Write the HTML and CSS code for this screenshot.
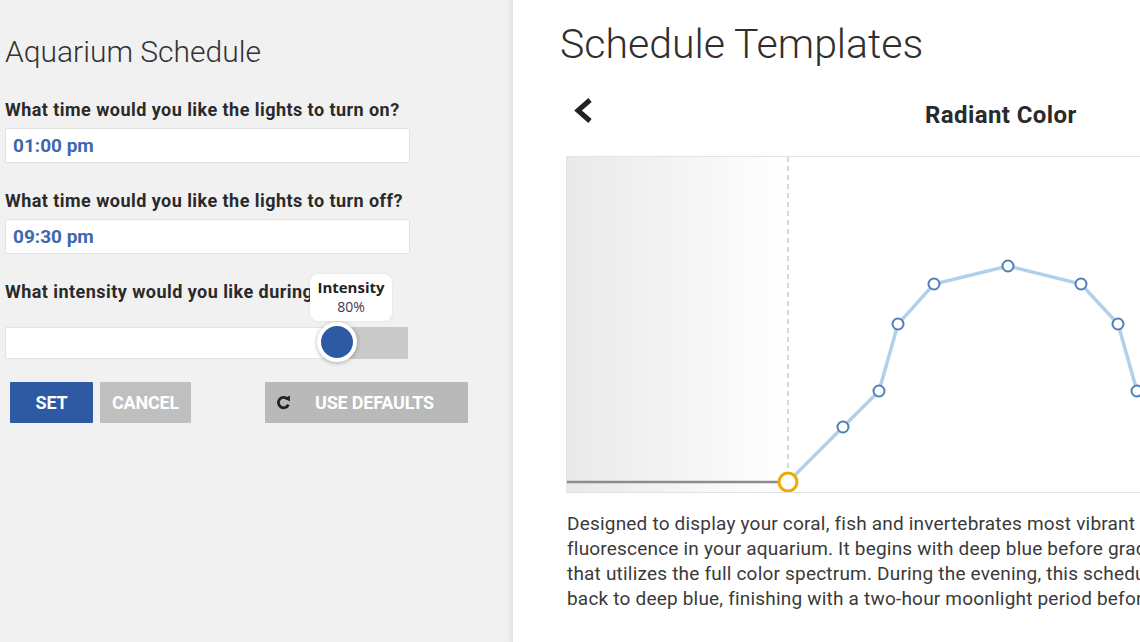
FILE: index.html
```html
<!DOCTYPE html>
<html lang="en">

<head>
    <meta charset="UTF-8">
    <meta name="viewport" content="width=device-width, initial-scale=1.0">
    <title>Aquarium Schedule</title>
    <link rel="stylesheet" href="styles.css">
</head>

<body>
    <div class="page">
        <!-- left: schedule form -->
        <section class="left">
            <h1 class="title">Aquarium Schedule</h1>

            <div class="q">What time would you like the lights to turn on?</div>
            <div class="field">01:00 pm</div>

            <div class="q q-next">What time would you like the lights to turn off?</div>
            <div class="field">09:30 pm</div>

            <div class="q q-next">What intensity would you like during the day?</div>
            <div class="slider">
                <div class="slider-fill"></div>
                <div class="slider-rest"></div>
                <div class="knob"></div>
                <div class="tip">
                    <b>Intensity</b>
                    <span>80%</span>
                </div>
            </div>

            <div class="actions">
                <button class="btn btn-set">SET</button>
                <button class="btn btn-cancel">CANCEL</button>
                <button class="btn btn-defaults">
                    <svg class="ico" width="15" height="15" viewBox="0 0 15 15">
                        <path d="M11.6 4.2 A5.2 5.2 0 1 0 12.4 9.6" fill="none" stroke="#222" stroke-width="2.8" />
                        <polygon points="8.6,3.4 14,0.6 13.8,6.6" fill="#222" />
                    </svg>
                    <span>USE DEFAULTS</span>
                </button>
            </div>
        </section>

        <!-- right: templates -->
        <section class="right">
            <h2 class="heading">Schedule Templates</h2>

            <div class="tpl-head">
                <svg class="back" width="20" height="27" viewBox="0 0 20 27">
                    <polyline points="17,3 5,13.5 17,24" fill="none" stroke="#222" stroke-width="5" />
                </svg>
                <div class="tpl-name">Radiant Color</div>
            </div>

            <div class="chart">
                <svg width="640" height="335" viewBox="0 0 640 335">
                    <defs>
                        <linearGradient id="shade" x1="0" x2="1" y1="0" y2="0">
                            <stop offset="0" stop-color="#e9e9e9" />
                            <stop offset="1" stop-color="#ffffff" />
                        </linearGradient>
                    </defs>
                    <rect x="0" y="0" width="221" height="335" fill="url(#shade)" />
                    <line x1="221" y1="0" x2="221" y2="316" stroke="#c9c9c9" stroke-width="1.5" stroke-dasharray="5 4" />
                    <line x1="0" y1="325" x2="212" y2="325" stroke="#8c8c8c" stroke-width="2.5" />
                    <polyline points="221,325 276,270 312,234 331,167 367,127 441,109 514,127 551,167 570,234 606,270 642,325"
                        fill="none" stroke="#b3d0ea" stroke-width="3.5" />
                    <g fill="#fff" stroke="#4f7fba" stroke-width="2">
                        <circle cx="276" cy="270" r="5.5" />
                        <circle cx="312" cy="234" r="5.5" />
                        <circle cx="331" cy="167" r="5.5" />
                        <circle cx="367" cy="127" r="5.5" />
                        <circle cx="441" cy="109" r="5.5" />
                        <circle cx="514" cy="127" r="5.5" />
                        <circle cx="551" cy="167" r="5.5" />
                        <circle cx="570" cy="234" r="5.5" />
                    </g>
                    <circle cx="221" cy="325" r="9" fill="#fff" stroke="#efa900" stroke-width="3" />
                </svg>
            </div>

            <p class="desc">
                Designed to display your coral, fish and invertebrates most vibrant<br>
                fluorescence in your aquarium. It begins with deep blue before gradually<br>
                that utilizes the full color spectrum. During the evening, this schedule fades<br>
                back to deep blue, finishing with a two-hour moonlight period before lights out.
            </p>
        </section>
    </div>
</body>

</html>
```

FILE: styles.css
```css
html,
body {
    margin: 0;
    padding: 0;
    overflow: hidden;
}

body {
    font-family: Roboto, "Liberation Sans", sans-serif;
    color: #2b2b2b;
}

.page {
    display: flex;
    width: 1140px;
    height: 642px;
}

.left {
    flex: none;
    width: 513px;
    height: 642px;
    box-sizing: border-box;
    padding: 34px 0 0 5px;
    background: #f1f1f1;
    box-shadow: inset -7px 0 6px -5px rgba(0, 0, 0, 0.07);
}

.title {
    margin: 0 0 30px;
    font-size: 30px;
    line-height: 36px;
    font-weight: 300;
    color: #333;
}

.q {
    font-size: 18px;
    line-height: 20px;
    font-weight: 700;
    letter-spacing: 0.45px;
    color: #2a2a2a;
    white-space: nowrap;
    margin-bottom: 8px;
}

.q-next {
    margin-top: 28px;
}

.field {
    width: 405px;
    height: 35px;
    box-sizing: border-box;
    border: 1px solid #e2e2e2;
    border-radius: 2px;
    background: #fff;
    padding-left: 7px;
    font-size: 19px;
    line-height: 33px;
    font-weight: 700;
    color: #3d68ad;
}

.slider {
    position: relative;
    display: flex;
    width: 403px;
    height: 32px;
    margin-top: 25px;
}

.slider-fill {
    flex: 1;
    background: #fff;
    border: 1px solid #e4e4e4;
}

.slider-rest {
    width: 58px;
    background: #c9c9c9;
}

.knob {
    position: absolute;
    left: 312px;
    top: -5px;
    width: 32px;
    height: 32px;
    border: 4px solid #fff;
    border-radius: 50%;
    background: #2e5aa5;
    box-shadow: 0 1px 4px rgba(0, 0, 0, 0.3);
}

.tip {
    position: absolute;
    left: 305px;
    top: -53px;
    width: 82px;
    height: 47px;
    box-sizing: border-box;
    padding-top: 3px;
    border-radius: 8px;
    background: #fff;
    box-shadow: 0 0 3px rgba(0, 0, 0, 0.08);
    text-align: center;
    font-family: "Open Sans", "Liberation Sans", sans-serif;
    color: #222;
}

.tip b {
    display: block;
    font-size: 15px;
    line-height: 21px;
}

.tip span {
    display: block;
    font-size: 14px;
    line-height: 18px;
    color: #3b3b55;
}

.actions {
    display: flex;
    margin-top: 23px;
    padding-left: 5px;
}

.btn {
    height: 41px;
    border: 0;
    border-radius: 1px;
    color: #fff;
    font-family: Roboto, "Liberation Sans", sans-serif;
    font-size: 18px;
    font-weight: 700;
    letter-spacing: -0.2px;
    padding: 0;
}

.btn-set {
    width: 83px;
    background: #2e5aa4;
}

.btn-cancel {
    width: 91px;
    margin-left: 7px;
    background: #bfbfbf;
}

.btn-defaults {
    display: flex;
    align-items: center;
    width: 203px;
    margin-left: 74px;
    padding-left: 11px;
    background: #b9b9b9;
}

.btn-defaults .ico {
    margin-right: 24px;
}

.right {
    flex: 1;
    min-width: 0;
    overflow: hidden;
    background: #fff;
    padding: 20px 0 0 47px;
}

.heading {
    margin: 0;
    font-size: 41px;
    line-height: 48px;
    font-weight: 300;
    color: #2f2f2f;
}

.tpl-head {
    display: flex;
    align-items: center;
    height: 40px;
    margin-top: 25px;
    padding-left: 13px;
}

.back {
    margin-bottom: 5px;
}

.tpl-name {
    margin-left: 332px;
    padding-top: 4px;
    font-size: 24px;
    font-weight: 700;
    letter-spacing: 0.4px;
    color: #2a2a2a;
    white-space: nowrap;
}

.chart {
    width: 640px;
    height: 335px;
    margin: 23px 0 0 6px;
    border: 1px solid #e3e3e3;
}

.chart svg {
    display: block;
}

.desc {
    margin: 18px 0 0 7px;
    font-size: 19px;
    line-height: 25px;
    letter-spacing: 0.2px;
    color: #3a3a3a;
    white-space: nowrap;
}
```
